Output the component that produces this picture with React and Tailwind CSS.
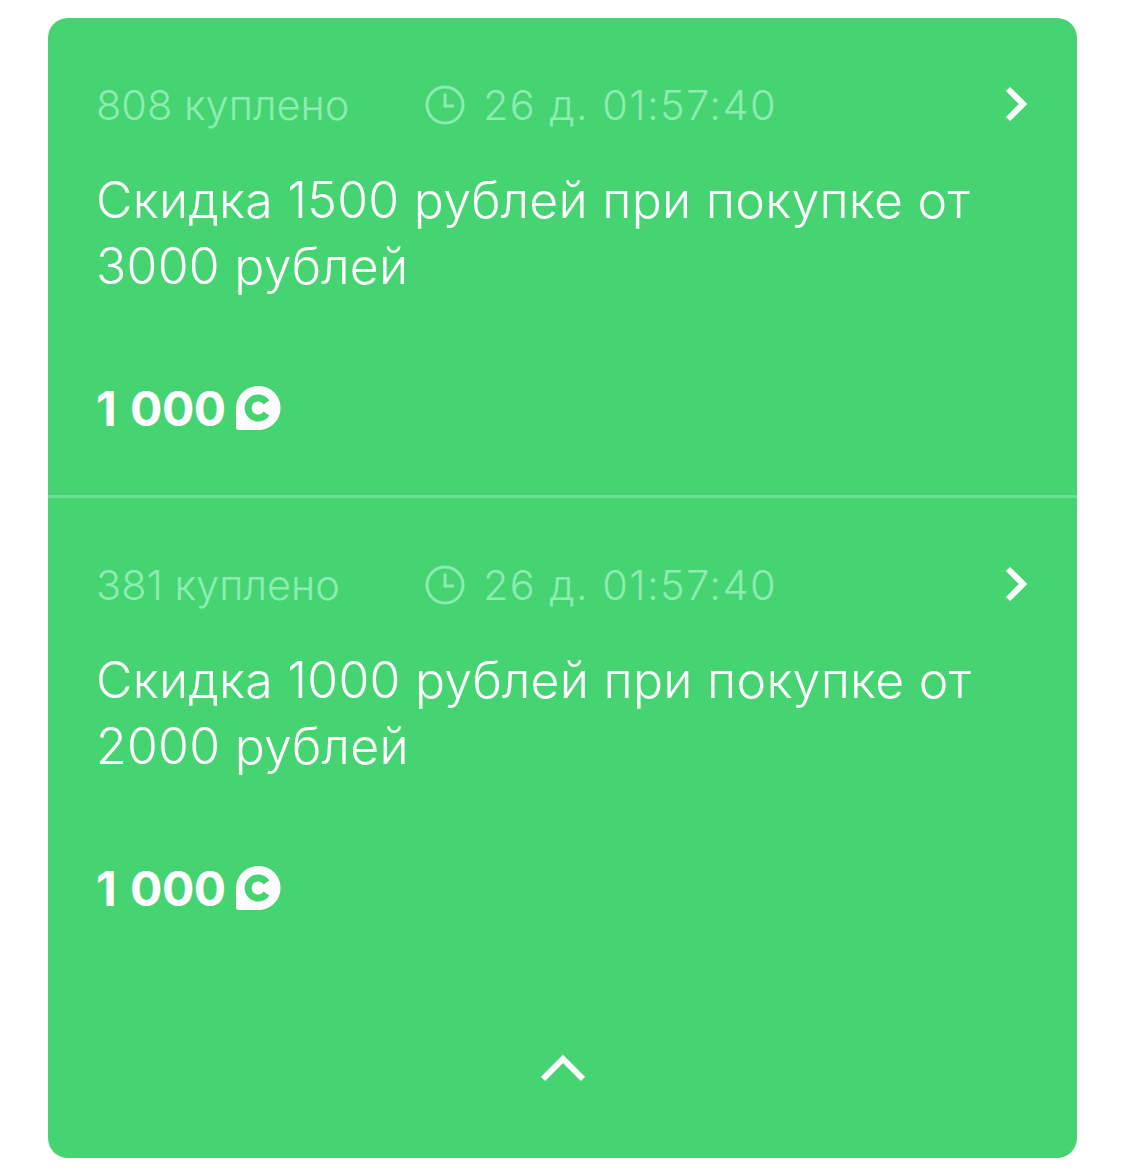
function Clock() {
  return (
    <svg width="40" height="40" viewBox="0 0 40 40" fill="none" stroke="#8bebb0" strokeWidth="3" className="block">
      <circle cx="20" cy="20" r="18" />
      <path d="M20 8.5V21H29" />
    </svg>
  );
}

function Coin() {
  return (
    <svg width="46" height="46" viewBox="0 0 46 46" className="block ml-[9px] -mt-[2px]">
      <path fill="#fff" d="M23.5 1C35.5 1 45.5 10.5 45.5 23C45.5 35 35.5 45 23.5 45H4C2 45 1 44 1 42V23C1 10.5 11 1 23.5 1Z" />
      <path fill="none" stroke="#46d473" strokeWidth="7" d="M31.5 17.5A10 10 0 1 0 31.5 28.5" />
    </svg>
  );
}

function Deal({ count, title1, title2, divider }) {
  return (
    <div className={"pl-[48px] pr-[47px] h-[480px] flex flex-col " + (divider ? "border-b-[3px] border-[#6bdf92]" : "")}>
      <div className="flex items-center h-10 mt-[67px] text-[41.5px] leading-10 text-[#8eecb3] font-[350]">
        <span className="w-[329px]">{count}</span>
        <Clock />
        <span className="ml-[18px] tracking-[1.4px]">26 д. 01:57:40</span>
        <svg width="26" height="36" viewBox="0 0 26 36" fill="none" stroke="#fff" strokeWidth="6" className="ml-auto -mt-[2px] block">
          <path d="M4 3L19 18L4 33" />
        </svg>
      </div>
      <div className="mt-[42px] text-[50px] leading-[66px] tracking-[0.25px] text-white font-[350]">
        <div>{title1}</div>
        <div>{title2}</div>
      </div>
      <div className="flex items-center mt-[82px] h-[56px] text-[48px] font-bold leading-[56px] text-white">
        <span className="[word-spacing:3px] tracking-[-0.5px]">1 000</span>
        <Coin />
      </div>
    </div>
  );
}

export default function App() {
  return (
    <div className="w-[1125px] h-[1175px] bg-white pt-[18px] px-12" style={{ fontFamily: 'Inter, "Noto Sans", sans-serif' }}>
      <div className="w-[1029px] h-[1140px] bg-[#46d473] rounded-[20px] overflow-hidden flex flex-col">
        <Deal count="808 куплено" title1="Скидка 1500 рублей при покупке от" title2="3000 рублей" divider />
        <Deal count="381 куплено" title1="Скидка 1000 рублей при покупке от" title2="2000 рублей" />
        <div className="flex justify-center pt-[76px]">
          <svg width="44" height="28" viewBox="0 0 44 28" fill="none" stroke="#fff" strokeWidth="6">
            <path d="M2 25L22 5L42 25" />
          </svg>
        </div>
      </div>
    </div>
  );
}
